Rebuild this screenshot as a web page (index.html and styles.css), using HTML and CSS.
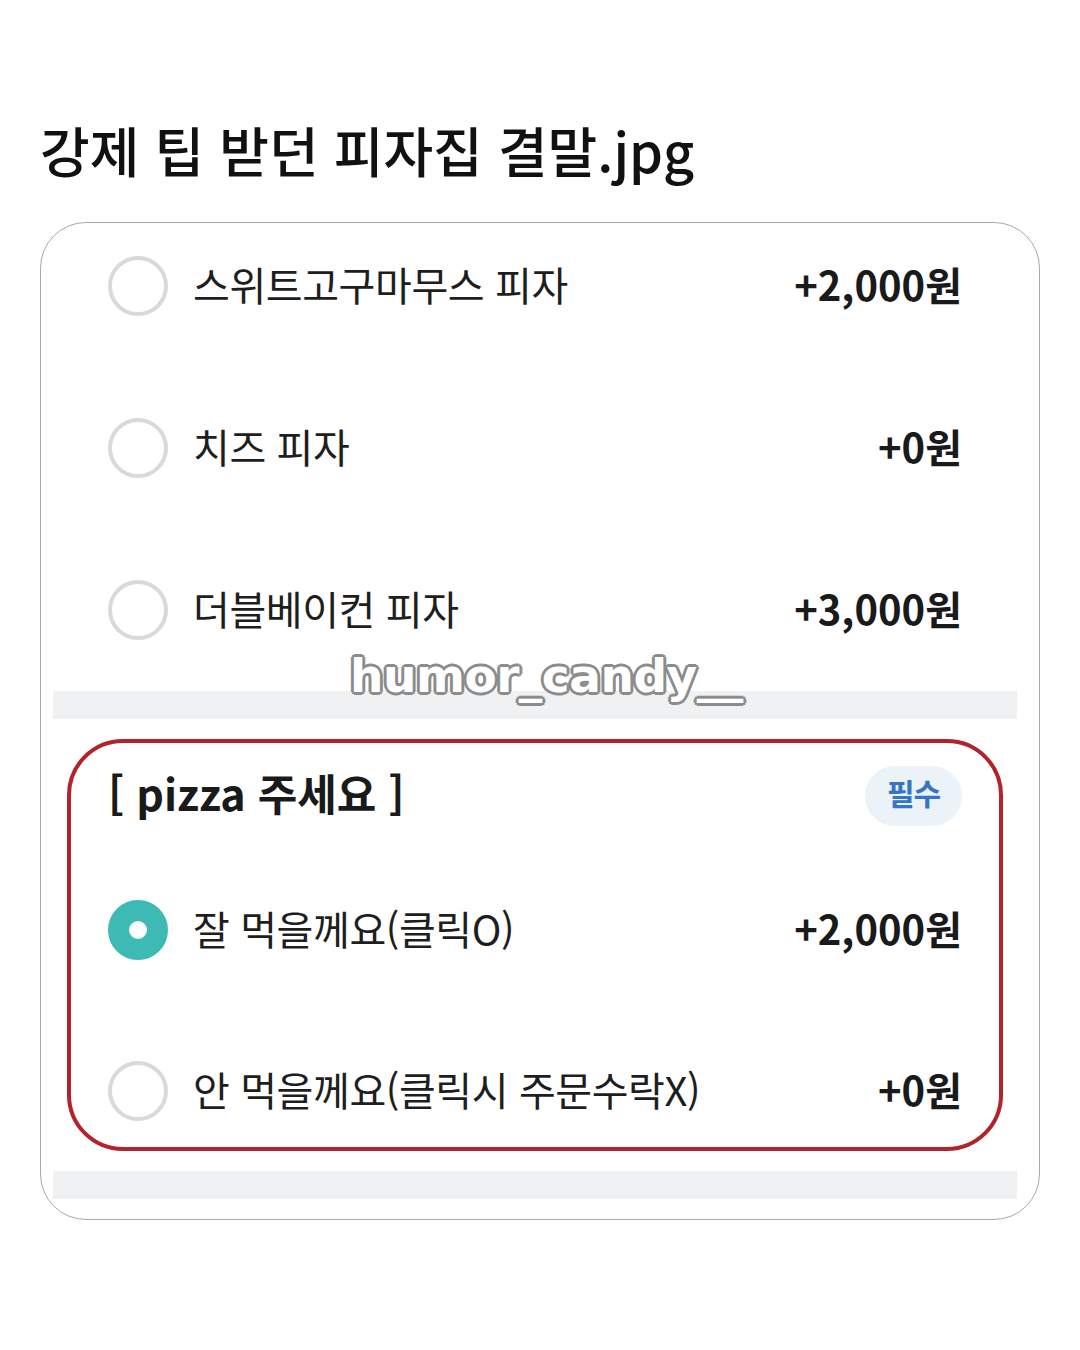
FILE: index.html
```html
<!DOCTYPE html>
<html lang="ko">
<head>
  <meta charset="UTF-8">
  <meta name="viewport" content="width=device-width, initial-scale=1.0">
  <title>강제 팁 받던 피자집 결말.jpg</title>
  <link rel="stylesheet" href="styles.css">
</head>
<body>
  <h1 class="post-title">강제 팁 받던 피자집 결말.jpg</h1>

  <div class="card">
    <div class="option-list">
      <div class="option">
        <span class="radio"></span>
        <span class="option-name">스위트고구마무스 피자</span>
        <span class="option-price">+2,000원</span>
      </div>
      <div class="option">
        <span class="radio"></span>
        <span class="option-name">치즈 피자</span>
        <span class="option-price">+0원</span>
      </div>
      <div class="option">
        <span class="radio"></span>
        <span class="option-name">더블베이컨 피자</span>
        <span class="option-price">+3,000원</span>
      </div>
    </div>

    <div class="divider"></div>
    <div class="watermark">humor_candy__</div>

    <div class="highlight">
      <div class="group-head">
        <h2>[ pizza 주세요 ]</h2>
        <span class="badge">필수</span>
      </div>
      <div class="option-list inner">
        <div class="option">
          <span class="radio checked"></span>
          <span class="option-name">잘 먹을께요(클릭O)</span>
          <span class="option-price">+2,000원</span>
        </div>
        <div class="option">
          <span class="radio"></span>
          <span class="option-name">안 먹을께요(클릭시 주문수락X)</span>
          <span class="option-price">+0원</span>
        </div>
      </div>
    </div>

    <div class="divider bottom"></div>
  </div>
</body>
</html>
```

FILE: styles.css
```css
body {
  margin: 0;
  padding: 0;
  background: #fff;
  font-family: "Noto Sans CJK KR", "Noto Sans", sans-serif;
  color: #111;
}

.post-title {
  margin: 0;
  padding: 110px 40px 0;
  font-size: 54px;
  font-weight: 500;
  line-height: 80px;
  height: 112px;
}

.card {
  position: relative;
  margin: 0 40px;
  height: 998px;
  border: 1px solid #a8a8a8;
  border-radius: 46px;
  overflow: hidden;
  box-sizing: border-box;
}

.option-list {
  display: flex;
  flex-direction: column;
  gap: 102px;
  padding: 31px 77px 0 67px;
}

.option {
  display: flex;
  align-items: center;
  height: 60px;
}

.radio {
  width: 60px;
  height: 60px;
  margin-top: 4px;
  border: 4px solid #d9d9d9;
  border-radius: 50%;
  box-sizing: border-box;
  flex-shrink: 0;
}

.radio.checked {
  border: 21px solid #3dbab3;
  background: #fff;
}

.option-name {
  margin-left: 25px;
  font-size: 40px;
  letter-spacing: -0.4px;
  color: #1e1e1e;
}

.option-price {
  margin-left: auto;
  font-size: 40px;
  font-weight: 700;
  color: #1a1a1a;
}

.divider {
  margin: 53px 22px 0 12px;
  height: 28px;
  background: #f0f1f3;
}

.divider.bottom {
  margin-top: 20px;
}

.watermark {
  position: absolute;
  top: 425px;
  left: 309px;
  font-family: "DejaVu Sans", sans-serif;
  font-weight: 700;
  font-size: 47px;
  letter-spacing: -0.5px;
  color: #fff;
  text-shadow:
    3px 0 0 #8c8c8c, -3px 0 0 #8c8c8c, 0 3px 0 #8c8c8c, 0 -3px 0 #8c8c8c,
    2px 2px 0 #8c8c8c, -2px 2px 0 #8c8c8c, 2px -2px 0 #8c8c8c, -2px -2px 0 #8c8c8c;
}

.highlight {
  margin: 20px 36px 0 26px;
  border: 4px solid #b3232b;
  border-radius: 56px;
  padding: 23px 37px 28px;
}

.group-head {
  display: flex;
  justify-content: space-between;
  align-items: center;
}

.group-head h2 {
  margin: -8px 0 0;
  font-size: 43px;
  font-weight: 700;
  color: #1a1a1a;
}

.badge {
  width: 97px;
  height: 60px;
  border-radius: 30px;
  background: #ebf3f9;
  color: #3574c8;
  font-size: 30px;
  font-weight: 700;
  line-height: 52px;
  text-align: center;
  letter-spacing: -1px;
}

.option-list.inner {
  padding: 72px 0 0;
  gap: 101px;
}
```
